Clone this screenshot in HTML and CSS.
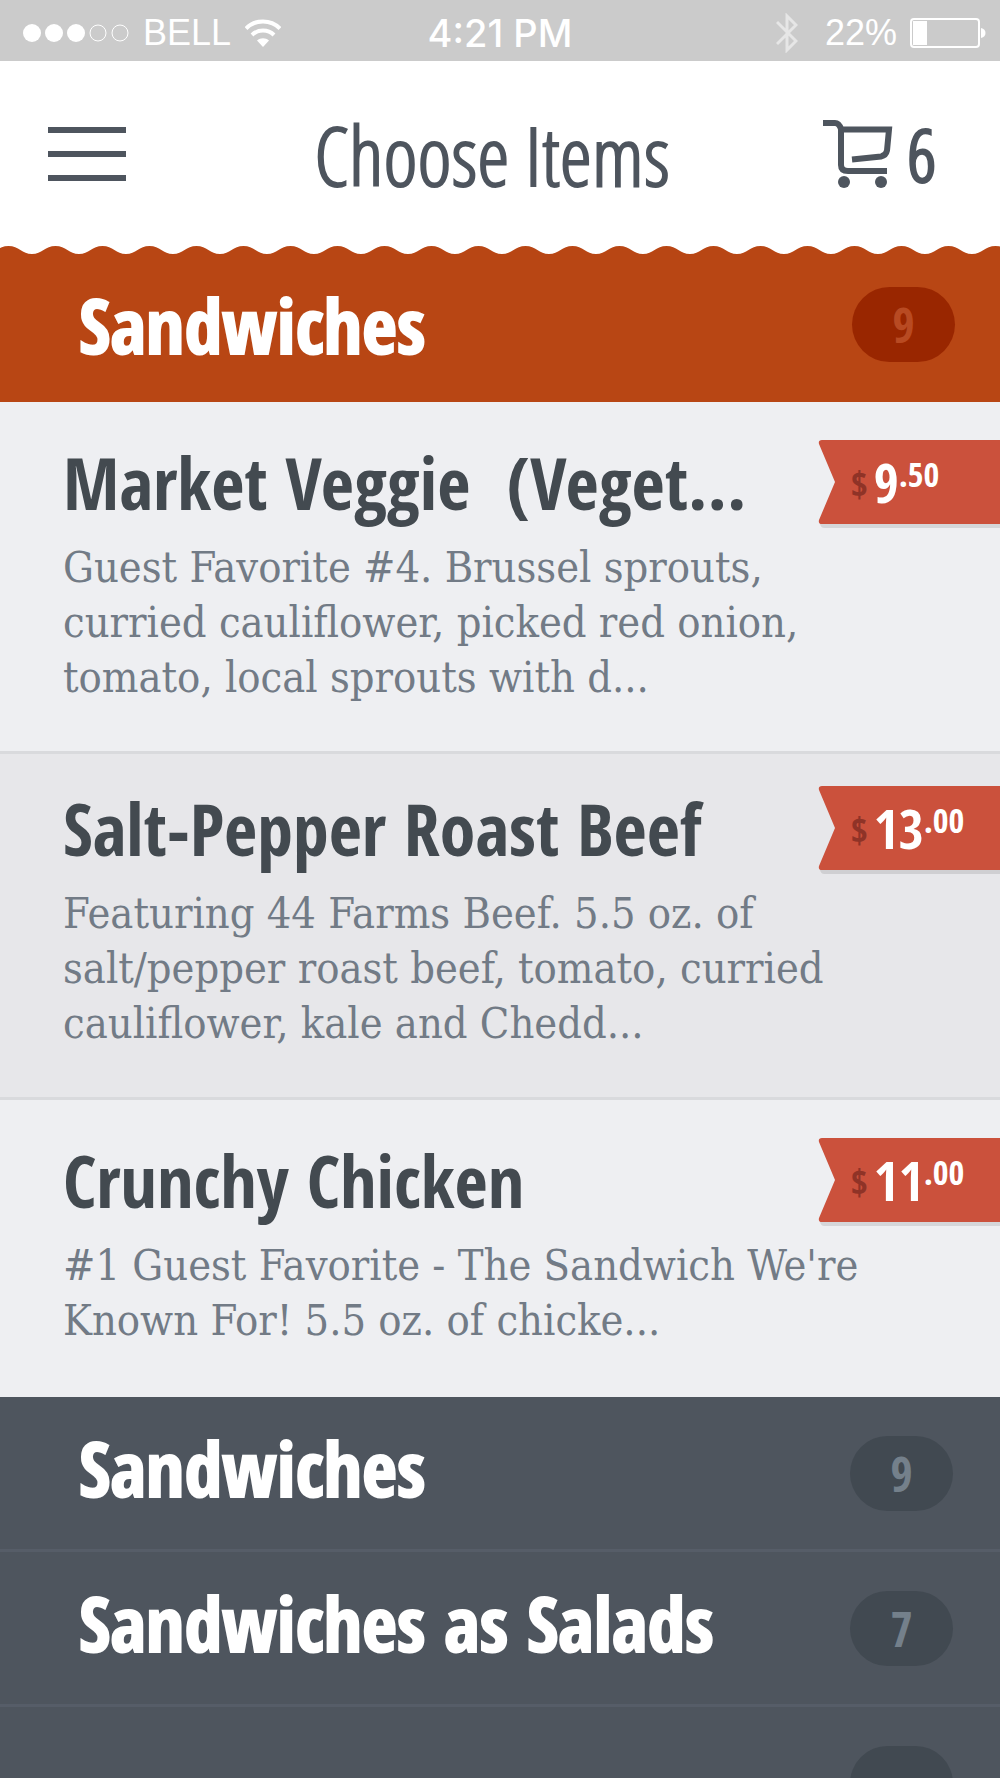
FILE: index.html
```html
<!DOCTYPE html>
<html lang="en">
<head>
  <meta charset="UTF-8" />
  <meta name="viewport" content="width=device-width, initial-scale=1.0" />
  <title>Choose Items</title>
  <link rel="stylesheet" href="styles.css">
</head>
<body>
  <!-- Phone status bar -->
  <div class="status-bar">
    <div class="status-left">
      <svg class="signal" width="106" height="18" viewBox="0 0 106 18" aria-hidden="true">
        <g fill="#fff">
          <circle cx="9" cy="9" r="9" />
          <circle cx="31" cy="9" r="9" />
          <circle cx="53" cy="9" r="9" />
        </g>
        <g fill="none" stroke="#fff">
          <circle cx="75" cy="9" r="8" />
          <circle cx="97" cy="9" r="8" />
        </g>
      </svg>
      <span>BELL</span>
      <svg class="wifi" width="36" height="28" viewBox="0 0 36 28" aria-hidden="true">
        <g fill="none" stroke="#fff" stroke-width="4">
          <path d="M1 9.5C10 0 26 0 35 9.5" />
          <path d="M7 16C13 10 23 10 29 16" />
        </g>
        <path d="M18 28l-6-6.500c3.500-3 8.500-3 12 0z" fill="#fff" />
      </svg>
    </div>
    <span class="status-time">4:21 PM</span>
    <div class="status-right">
      <svg class="bluetooth" width="22" height="40" viewBox="0 0 22 40" aria-hidden="true">
        <path d="M1 9l19 19-9 9V3l9 9L1 31" fill="none" stroke="#e6e6e6" stroke-width="3" />
      </svg>
      <span>22%</span>
      <svg class="battery" width="76" height="30" viewBox="0 0 76 30" aria-hidden="true">
        <rect x="1" y="1" width="68" height="28" rx="3" fill="none" stroke="#fff" stroke-width="2" />
        <rect x="3" y="3" width="14" height="24" fill="#fff" />
        <path d="M71 10c6 1 6 9 0 10z" fill="#fff" />
      </svg>
    </div>
  </div>

  <header class="header">
    <button class="menu-btn" type="button" aria-label="Menu">
      <span></span>
      <span></span>
      <span></span>
    </button>
    <h1>Choose Items</h1>
    <button class="cart-btn" type="button" aria-label="Cart, 6 items">
      <svg width="70" height="68" viewBox="0 0 70 68" aria-hidden="true">
        <g fill="none" stroke="#4e555e" stroke-width="6">
          <path d="M0 3h12q4 0 6 6v36q0 6 7 6h39" />
          <path d="M18 9.500h48l-2 21q-1 5-6 6l-29 3" />
        </g>
        <g fill="#4e555e">
          <circle cx="21" cy="62" r="6" />
          <circle cx="58" cy="62" r="6" />
        </g>
      </svg>
      <span>6</span>
    </button>
  </header>

  <main>
    <section class="open-category">
      <!-- Scalloped edge between the header and the open category -->
      <svg class="wave" width="100%" height="9" aria-hidden="true">
        <defs>
          <pattern id="scallop" x="-15" width="47" height="9" patternUnits="userSpaceOnUse">
            <path d="M0 9V8C10 8 13 0 23.500 0S37 8 47 8V9z" fill="#b84614" />
          </pattern>
        </defs>
        <rect width="100%" height="9" fill="url(#scallop)" />
      </svg>
      <button class="category category-active" type="button" aria-expanded="true">
        <span class="category-name">Sandwiches</span>
        <span class="count">9</span>
      </button>

      <article class="item">
        <div class="item-text">
          <h2>Market Veggie &nbsp;(Veget...</h2>
          <p>Guest Favorite #4. Brussel sprouts,<br>curried cauliflower, picked red onion,<br>tomato, local sprouts with d...</p>
        </div>
        <div class="price">
          <svg class="ribbon" width="100%" height="88" aria-hidden="true"><use href="#ribbonShape" /></svg>
          <span class="currency">$</span><span class="dollars">9</span><span class="cents">.50</span>
        </div>
      </article>

      <article class="item item-alt">
        <div class="item-text">
          <h2>Salt-Pepper Roast Beef</h2>
          <p>Featuring 44 Farms Beef. 5.5 oz. of<br>salt/pepper roast beef, tomato, curried<br>cauliflower, kale and Chedd...</p>
        </div>
        <div class="price">
          <svg class="ribbon" width="100%" height="88" aria-hidden="true"><use href="#ribbonShape" /></svg>
          <span class="currency">$</span><span class="dollars">13</span><span class="cents">.00</span>
        </div>
      </article>

      <article class="item">
        <div class="item-text">
          <h2>Crunchy Chicken</h2>
          <p>#1 Guest Favorite - The Sandwich We're<br>Known For! 5.5 oz. of chicke...</p>
        </div>
        <div class="price">
          <svg class="ribbon" width="100%" height="88" aria-hidden="true"><use href="#ribbonShape" /></svg>
          <span class="currency">$</span><span class="dollars">11</span><span class="cents">.00</span>
        </div>
      </article>
    </section>

    <nav class="categories" aria-label="More categories">
      <button class="category" type="button">
        <span class="category-name">Sandwiches</span>
        <span class="count">9</span>
      </button>
      <button class="category" type="button">
        <span class="category-name">Sandwiches as Salads</span>
        <span class="count">7</span>
      </button>
      <button class="category" type="button" aria-label="Next category">
        <span class="category-name"></span>
        <span class="count"></span>
      </button>
    </nav>
  </main>

  <!-- Shared price ribbon -->
  <svg class="defs" width="0" height="0" aria-hidden="true">
    <defs>
      <g id="ribbonShape">
        <path d="M2 80H2000V88H6Q3 88 2 84z" fill="#000" fill-opacity="0.1" />
        <path d="M4 0H2000V84H4Q0 84 1 80L17 42L1 4Q0 0 4 0z" fill="#cb513c" />
      </g>
    </defs>
  </svg>
</body>
</html>
```
FILE: styles.css
```css
* {
  box-sizing: border-box;
}

html {
  height: 100%;
  overflow: hidden;
  background-color: #4e555e;
}

body {
  margin: 0;
  height: 100%;
  overflow: hidden;
  font-family: "Open Sans Condensed", "Open Sans", sans-serif;
  color: #434a50;
}

h1,
h2,
p {
  margin: 0;
}

button {
  margin: 0;
  padding: 0;
  border: none;
  background: none;
  font-family: inherit;
  color: inherit;
  cursor: pointer;
}

/* Status bar */
.status-bar {
  display: grid;
  grid-template-columns: 1fr auto 1fr;
  align-items: center;
  height: 61px;
  padding: 4px 14px 0;
  background-color: #cbcbcb;
  color: #fff;
  font-family: "Liberation Sans", Arial, sans-serif;
  font-size: 36px;
}

.status-left,
.status-right {
  display: flex;
  align-items: center;
}

.status-left {
  gap: 14px;
  padding-left: 9px;
}

.status-right {
  justify-content: flex-end;
  gap: 13px;
}

.bluetooth {
  margin-right: 14px;
}

.status-time {
  font-family: Inter, sans-serif;
  font-size: 38px;
  font-weight: 500;
}

/* Header */
.header {
  display: grid;
  grid-template-columns: 1fr auto 1fr;
  align-items: center;
  height: 185px;
  padding: 0 64px 0 48px;
  background-color: #fff;
  color: #4e555e;
}

.menu-btn {
  display: flex;
  flex-direction: column;
  gap: 18px;
  width: 78px;
}

.menu-btn span {
  height: 6px;
  background-color: #4e555e;
}

h1,
.cart-btn {
  font-family: "Open Sans Condensed Light", "Open Sans Condensed", "Open Sans", sans-serif;
  font-weight: 300;
}

h1 {
  font-size: 82px;
  line-height: 84px;
  -webkit-text-stroke: 2px currentColor;
}

.cart-btn {
  display: flex;
  align-items: center;
  justify-self: end;
  gap: 14px;
  font-size: 72px;
  line-height: 84px;
  -webkit-text-stroke: 3px currentColor;
}

/* Categories */
.wave {
  display: block;
  background-color: #fff;
}

.category {
  display: flex;
  align-items: center;
  justify-content: space-between;
  width: 100%;
  height: 155px;
  padding: 0 47px 0 79px;
  border-bottom: 3px solid #565d68;
  color: #fff;
  font-size: 76px;
  font-weight: bold;
  text-align: left;
}

.category-name {
  -webkit-text-stroke: 2px currentColor;
}

.category-active {
  height: 147px;
  padding-right: 45px;
  padding-bottom: 8px;
  border-bottom: none;
  background-color: #b84614;
}

.count {
  width: 103px;
  height: 75px;
  border-radius: 38px;
  background-color: #414951;
  color: #74808b;
  font-size: 48px;
  line-height: 75px;
  text-align: center;
}

.category-active .count {
  background-color: #992600;
  color: #b84a22;
}

.categories {
  background-color: #4e555e;
}

.categories .category-name {
  padding-bottom: 12px;
}

/* Menu items */
.item {
  display: flex;
  justify-content: space-between;
  padding: 38px 0 46px 63px;
  border-bottom: 3px solid #d9dadd;
  background-color: #eeeff2;
}

.item-alt {
  padding-top: 32px;
  background-color: #e7e7ea;
}

.item:last-child {
  padding-bottom: 49px;
  border-bottom: none;
}

.item-text {
  width: 0;
  white-space: nowrap;
}

h2 {
  font-size: 72px;
  font-weight: bold;
  line-height: 84px;
}

.item p {
  margin-top: 16px;
  color: #727b86;
  font-family: "DejaVu Serif Condensed", "DejaVu Serif", serif;
  font-size: 43px;
  line-height: 55px;
}

/* Price ribbon */
.price {
  position: relative;
  display: flex;
  align-items: flex-start;
  width: 182px;
  height: 84px;
  padding: 12px 0 0 33px;
  color: #fff;
  font-weight: bold;
}

.ribbon {
  position: absolute;
  top: 0;
  left: 0;
}

.price span {
  position: relative;
}

.currency {
  margin: 12px 6px 0 0;
  color: #8f3327;
  font-size: 36px;
  line-height: 40px;
}

.dollars {
  font-size: 54px;
  line-height: 60px;
}

.cents {
  font-size: 34px;
  line-height: 44px;
}

.defs {
  position: absolute;
}
```
